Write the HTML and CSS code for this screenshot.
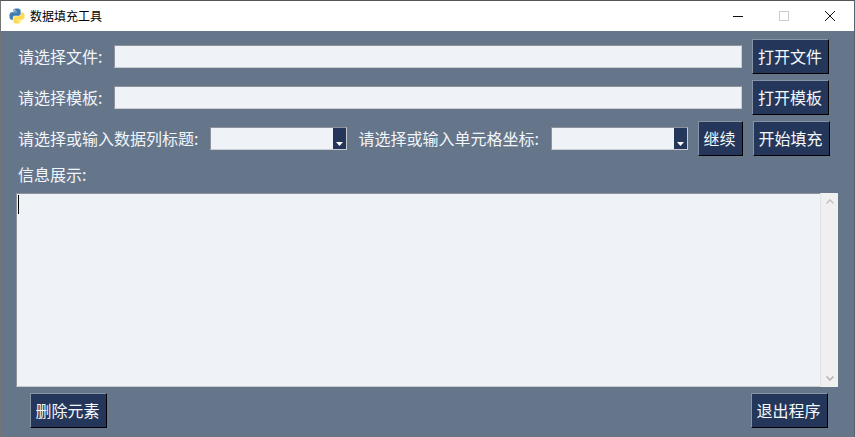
FILE: index.html
```html
<!DOCTYPE html>
<html lang="zh-CN">
<head>
<meta charset="utf-8">
<title>数据填充工具</title>
<link rel="stylesheet" href="styles.css">
</head>
<body>
<div class="window">
  <header class="titlebar">
    <svg class="app-icon" viewBox="0 0 110 110" width="16" height="16" aria-hidden="true">
      <path fill="#3f7cb0" d="M54 3C28 3 30 14 30 14v12h25v4H20S3 28 3 55s15 26 15 26h9V68s-1-15 14-15h25s14 0 14-14V17S82 3 54 3zM40 11a4.500 4.500 0 1 1 0 9 4.500 4.500 0 0 1 0-9z"/>
      <path fill="#ffd94f" d="M56 107c26 0 24-11 24-11V84H55v-4h35s17 2 17-25-15-26-15-26h-9v13s1 15-14 15H44s-14 0-14 14v22s-2 14 26 14zm14-8a4.500 4.500 0 1 1 0-9 4.500 4.500 0 0 1 0 9z"/>
    </svg>
    <span class="title">数据填充工具</span>
    <div class="controls">
      <svg class="ctl" viewBox="0 0 46 30" width="46" height="30" aria-hidden="true"><path d="M18 15.500h10" stroke="#111" fill="none"/></svg>
      <svg class="ctl" viewBox="0 0 46 30" width="46" height="30" aria-hidden="true"><rect x="18.500" y="10.500" width="9" height="9" stroke="#ccc" fill="none"/></svg>
      <svg class="ctl" viewBox="0 0 46 30" width="46" height="30" aria-hidden="true"><path d="M18 10l10 10M28 10L18 20" stroke="#111" fill="none"/></svg>
    </div>
  </header>
  <main class="content">
    <div class="row">
      <label class="label">请选择文件:</label>
      <input class="entry entry-wide" type="text">
      <button class="btn">打开文件</button>
    </div>
    <div class="row">
      <label class="label">请选择模板:</label>
      <input class="entry entry-wide" type="text">
      <button class="btn">打开模板</button>
    </div>
    <div class="row">
      <label class="label">请选择或输入数据列标题:</label>
      <div class="combo combo-a">
        <input class="combo-input" type="text">
        <span class="combo-arrow"><svg viewBox="0 0 7 4" width="7" height="4" aria-hidden="true"><path d="M0 0h7L3.500 4z" fill="#fff"/></svg></span>
      </div>
      <label class="label label-b">请选择或输入单元格坐标:</label>
      <div class="combo combo-b">
        <input class="combo-input" type="text">
        <span class="combo-arrow"><svg viewBox="0 0 7 4" width="7" height="4" aria-hidden="true"><path d="M0 0h7L3.500 4z" fill="#fff"/></svg></span>
      </div>
      <button class="btn btn-small">继续</button>
      <button class="btn btn-fill">开始填充</button>
    </div>
    <div class="info-label"><span class="label">信息展示:</span></div>
    <div class="log">
      <div class="log-text"><span class="caret"></span></div>
      <div class="scrollbar">
        <svg viewBox="0 0 8 5" width="8" height="5" aria-hidden="true"><path d="M.5 4.500L4 1l3.500 3.500" stroke="#c4c4c4" stroke-width="1.500" fill="none"/></svg>
        <svg viewBox="0 0 8 5" width="8" height="5" aria-hidden="true"><path d="M.5.500L4 4 7.500.500" stroke="#b4b4b4" stroke-width="1.500" fill="none"/></svg>
      </div>
    </div>
    <div class="footer">
      <button class="btn">删除元素</button>
      <button class="btn">退出程序</button>
    </div>
  </main>
</div>
</body>
</html>
```
FILE: styles.css
```css
* { box-sizing: border-box; }
html, body { margin: 0; padding: 0; }
body {
  width: 855px;
  height: 437px;
  overflow: hidden;
  font-family: "Noto Sans CJK SC", "Noto Sans", sans-serif;
}
.window {
  width: 855px;
  height: 437px;
  display: flex;
  flex-direction: column;
  border-top: 1px solid #555;
  border-left: 1px solid #757575;
  border-right: 1px solid #5a6270;
  border-bottom: 1px solid #6a7482;
  background: #65768b;
}
.titlebar {
  height: 30px;
  flex: none;
  background: #fff;
  display: flex;
  align-items: center;
  padding-left: 8px;
}
.app-icon { flex: none; }
.title {
  margin-left: 5px;
  font-size: 12px;
  line-height: 16px;
  color: #000;
}
.controls {
  margin-left: auto;
  display: flex;
  margin-right: 1px;
}
.ctl { display: block; }
.content {
  flex: 1;
  display: flex;
  flex-direction: column;
  padding: 8px 24px 0 0;
}
.row {
  height: 35px;
  flex: none;
  margin-bottom: 6px;
  display: flex;
  align-items: center;
  padding-left: 17px;
}
.label {
  font-size: 16px;
  line-height: 22px;
  padding-bottom: 2px;
  color: #f2f5fa;
  white-space: nowrap;
}
.entry, .combo {
  height: 23px;
  border: 1px solid;
  border-color: #8f9298 #c9ccd0 #c9ccd0 #8f9298;
  background: #eff2f7;
}
.entry { padding: 0; outline: none; }
.entry-wide {
  width: 628px;
  margin-left: 12px;
  margin-right: 10px;
}
.btn {
  width: 77px;
  height: 35px;
  flex: none;
  padding: 0 2px 2px 0;
  border: 1px solid;
  border-color: #8794a6 #000 #000 #8794a6;
  background: #24375a;
  color: #f5f8fc;
  font-family: inherit;
  font-size: 16px;
  line-height: 22px;
}
.btn-small { width: 45px; margin-left: 10px; }
.btn-fill { margin-left: 10px; }
.combo {
  width: 137px;
  display: flex;
  flex: none;
}
.combo-a { margin-left: 12px; }
.label-b { margin-left: 11px; }
.combo-b { margin-left: 12px; }
.combo-input {
  flex: 1;
  min-width: 0;
  border: 0;
  padding: 0;
  outline: none;
  background: transparent;
}
.combo-arrow {
  width: 13px;
  flex: none;
  background: #24375a;
  display: flex;
  align-items: flex-end;
  justify-content: center;
  padding-bottom: 3px;
}
.info-label {
  height: 31px;
  flex: none;
  padding: 0 0 0 17px;
}
.log {
  width: 822px;
  height: 194px;
  flex: none;
  margin-left: 15px;
  display: flex;
  border: 1px solid;
  border-color: #8f9298 #c9ccd0 #c9ccd0 #8f9298;
  border-right: 0;
  background: #eff2f7;
}
.log-text {
  flex: 1;
  padding: 1px 0 0 1px;
}
.caret {
  display: block;
  width: 1px;
  height: 19px;
  background: #000;
}
.scrollbar {
  width: 18px;
  flex: none;
  margin-top: -1px;
  margin-bottom: -1px;
  background: #f0f0f0;
  border-left: 1px solid #e2e2e2;
  display: flex;
  flex-direction: column;
  justify-content: space-between;
  align-items: center;
  padding: 6px 0;
}
.footer {
  display: flex;
  justify-content: space-between;
  padding: 6px 2px 0 29px;
}
```
